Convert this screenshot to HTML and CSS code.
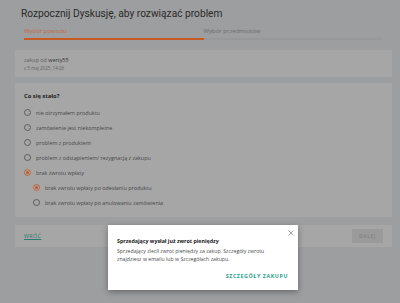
FILE: index.html
```html
<!DOCTYPE html>
<html lang="pl">
<head>
<meta charset="utf-8">
<title>Rozpocznij Dyskusję</title>
<link rel="stylesheet" href="styles.css">
</head>
<body>
<div class="page">
  <h1 class="title">Rozpocznij Dyskusję, aby rozwiązać problem</h1>
  <div class="steps">
    <div class="step active"><span class="step-label">Wybór powodu</span><div class="step-bar"></div></div>
    <div class="step"><span class="step-label">Wybór przedmiotów</span><div class="step-bar"></div></div>
  </div>
  <section class="card purchase">
    <div class="seller">zakup od <span class="login">werty55</span></div>
    <div class="date">z 5 maj 2025, 14:26</div>
  </section>
  <section class="card reasons">
    <h2 class="question">Co się stało?</h2>
    <ul class="options">
      <li class="option"><span class="radio"></span>nie otrzymałem produktu</li>
      <li class="option"><span class="radio"></span>zamówienie jest niekompletne</li>
      <li class="option"><span class="radio"></span>problem z produktem</li>
      <li class="option"><span class="radio"></span>problem z odstąpieniem/ rezygnacją z zakupu</li>
      <li class="option"><span class="radio checked"></span>brak zwrotu wpłaty</li>
      <li class="option sub"><span class="radio checked"></span>brak zwrotu wpłaty po odesłaniu produktu</li>
      <li class="option sub"><span class="radio"></span>brak zwrotu wpłaty po anulowaniu zamówienia</li>
    </ul>
  </section>
  <section class="card actions">
    <a class="back" href="#">WRÓĆ</a>
    <button class="next" type="button">DALEJ</button>
  </section>
</div>
<div class="modal">
  <button class="close" type="button" aria-label="Zamknij">
    <svg width="6" height="6" viewBox="0 0 6 6"><path d="M0.5 0.5L5.5 5.5M5.5 0.5L0.5 5.5" stroke="#8a8a8a" stroke-width="0.8" fill="none"/></svg>
  </button>
  <div class="modal-title">Sprzedający wysłał już zwrot pieniędzy</div>
  <p class="modal-text">Sprzedający zlecił zwrot pieniędzy za zakup. Szczegóły zwrotu znajdziesz w emailu lub w Szczegółach zakupu.</p>
  <div class="modal-actions"><a class="modal-link" href="#">SZCZEGÓŁY ZAKUPU</a></div>
</div>
</body>
</html>
```
FILE: styles.css
```css
* { box-sizing: border-box; }
html, body { margin: 0; padding: 0; }
body {
  background: #9d9e9f;
  font-family: "Open Sans", "Liberation Sans", sans-serif;
  width: 400px;
  height: 303px;
  overflow: hidden;
  position: relative;
}
.page {
  padding: 8px 8px 0 15px;
  display: flex;
  flex-direction: column;
}
.title {
  margin: 0 0 0 6px;
  font-family: Roboto, "Liberation Sans", sans-serif;
  font-weight: 400;
  font-size: 10.2px;
  line-height: 12px;
  color: #2a2a2a;
}
.steps {
  display: flex;
  margin: 7px 9px 0 9px;
}
.step {
  flex: 1;
  display: flex;
  flex-direction: column;
}
.step-label {
  font-size: 6px;
  line-height: 9px;
  color: #6c6c6c;
}
.step.active .step-label { color: #c56a3d; }
.step-bar {
  margin-top: 2px;
  height: 2px;
  background: #979899;
}
.step.active .step-bar { background: #c55a27; }
.card {
  background: #a6a6a6;
}
.purchase {
  margin-top: 10px;
  padding: 6px 9px 5px;
}
.seller {
  font-size: 5.4px;
  line-height: 8px;
  color: #5f5f5f;
}
.login { color: #333; }
.date {
  font-size: 4.5px;
  line-height: 8px;
  color: #626262;
}
.reasons {
  margin-top: 6px;
  padding: 9px 9px 7px;
}
.question {
  margin: 0 0 5px;
  font-size: 5.8px;
  line-height: 8px;
  font-weight: 700;
  color: #222;
}
.options {
  list-style: none;
  margin: 0;
  padding: 0;
}
.option {
  height: 15px;
  display: flex;
  align-items: center;
  font-size: 5.4px;
  color: #484848;
}
.option.sub { padding-left: 9px; }
.radio {
  width: 7px;
  height: 7px;
  border: 0.8px solid #5d5d5d;
  border-radius: 50%;
  margin-right: 5px;
  flex: none;
  display: flex;
  align-items: center;
  justify-content: center;
}
.radio.checked { border-color: #c0663a; }
.radio.checked::after {
  content: "";
  width: 3px;
  height: 3px;
  border-radius: 50%;
  background: #c4582a;
}
.actions {
  margin-top: 8px;
  padding: 4px 9px;
  display: flex;
  justify-content: space-between;
  align-items: center;
}
.back {
  font-size: 5.3px;
  letter-spacing: 0.4px;
  color: #2f7a6e;
  text-decoration: underline;
}
.next {
  width: 31px;
  height: 14px;
  border: 0;
  padding: 0;
  background: #9a9a9a;
  color: #878787;
  font-family: "Open Sans", "Liberation Sans", sans-serif;
  font-weight: 700;
  font-size: 5px;
  letter-spacing: 0.5px;
}
.modal {
  position: absolute;
  left: 108px;
  top: 225px;
  width: 190px;
  height: 65px;
  background: #fff;
  box-shadow: 0 2px 6px rgba(0,0,0,0.35);
  padding: 12px 10px 0 9px;
}
.close {
  position: absolute;
  right: 4px;
  top: 5px;
  width: 6px;
  height: 6px;
  padding: 0;
  border: 0;
  background: none;
  display: flex;
}
.modal-title {
  font-size: 5.3px;
  line-height: 8px;
  font-weight: 700;
  color: #222;
}
.modal-text {
  margin: 2px 0 0;
  font-size: 5.2px;
  line-height: 8px;
  color: #4a4a4a;
}
.modal-actions {
  display: flex;
  justify-content: flex-end;
  margin-top: 9px;
  line-height: 8px;
}
.modal-link {
  font-size: 5.3px;
  font-weight: 700;
  letter-spacing: 0.6px;
  color: #2a9f8c;
  text-decoration: none;
}
```
